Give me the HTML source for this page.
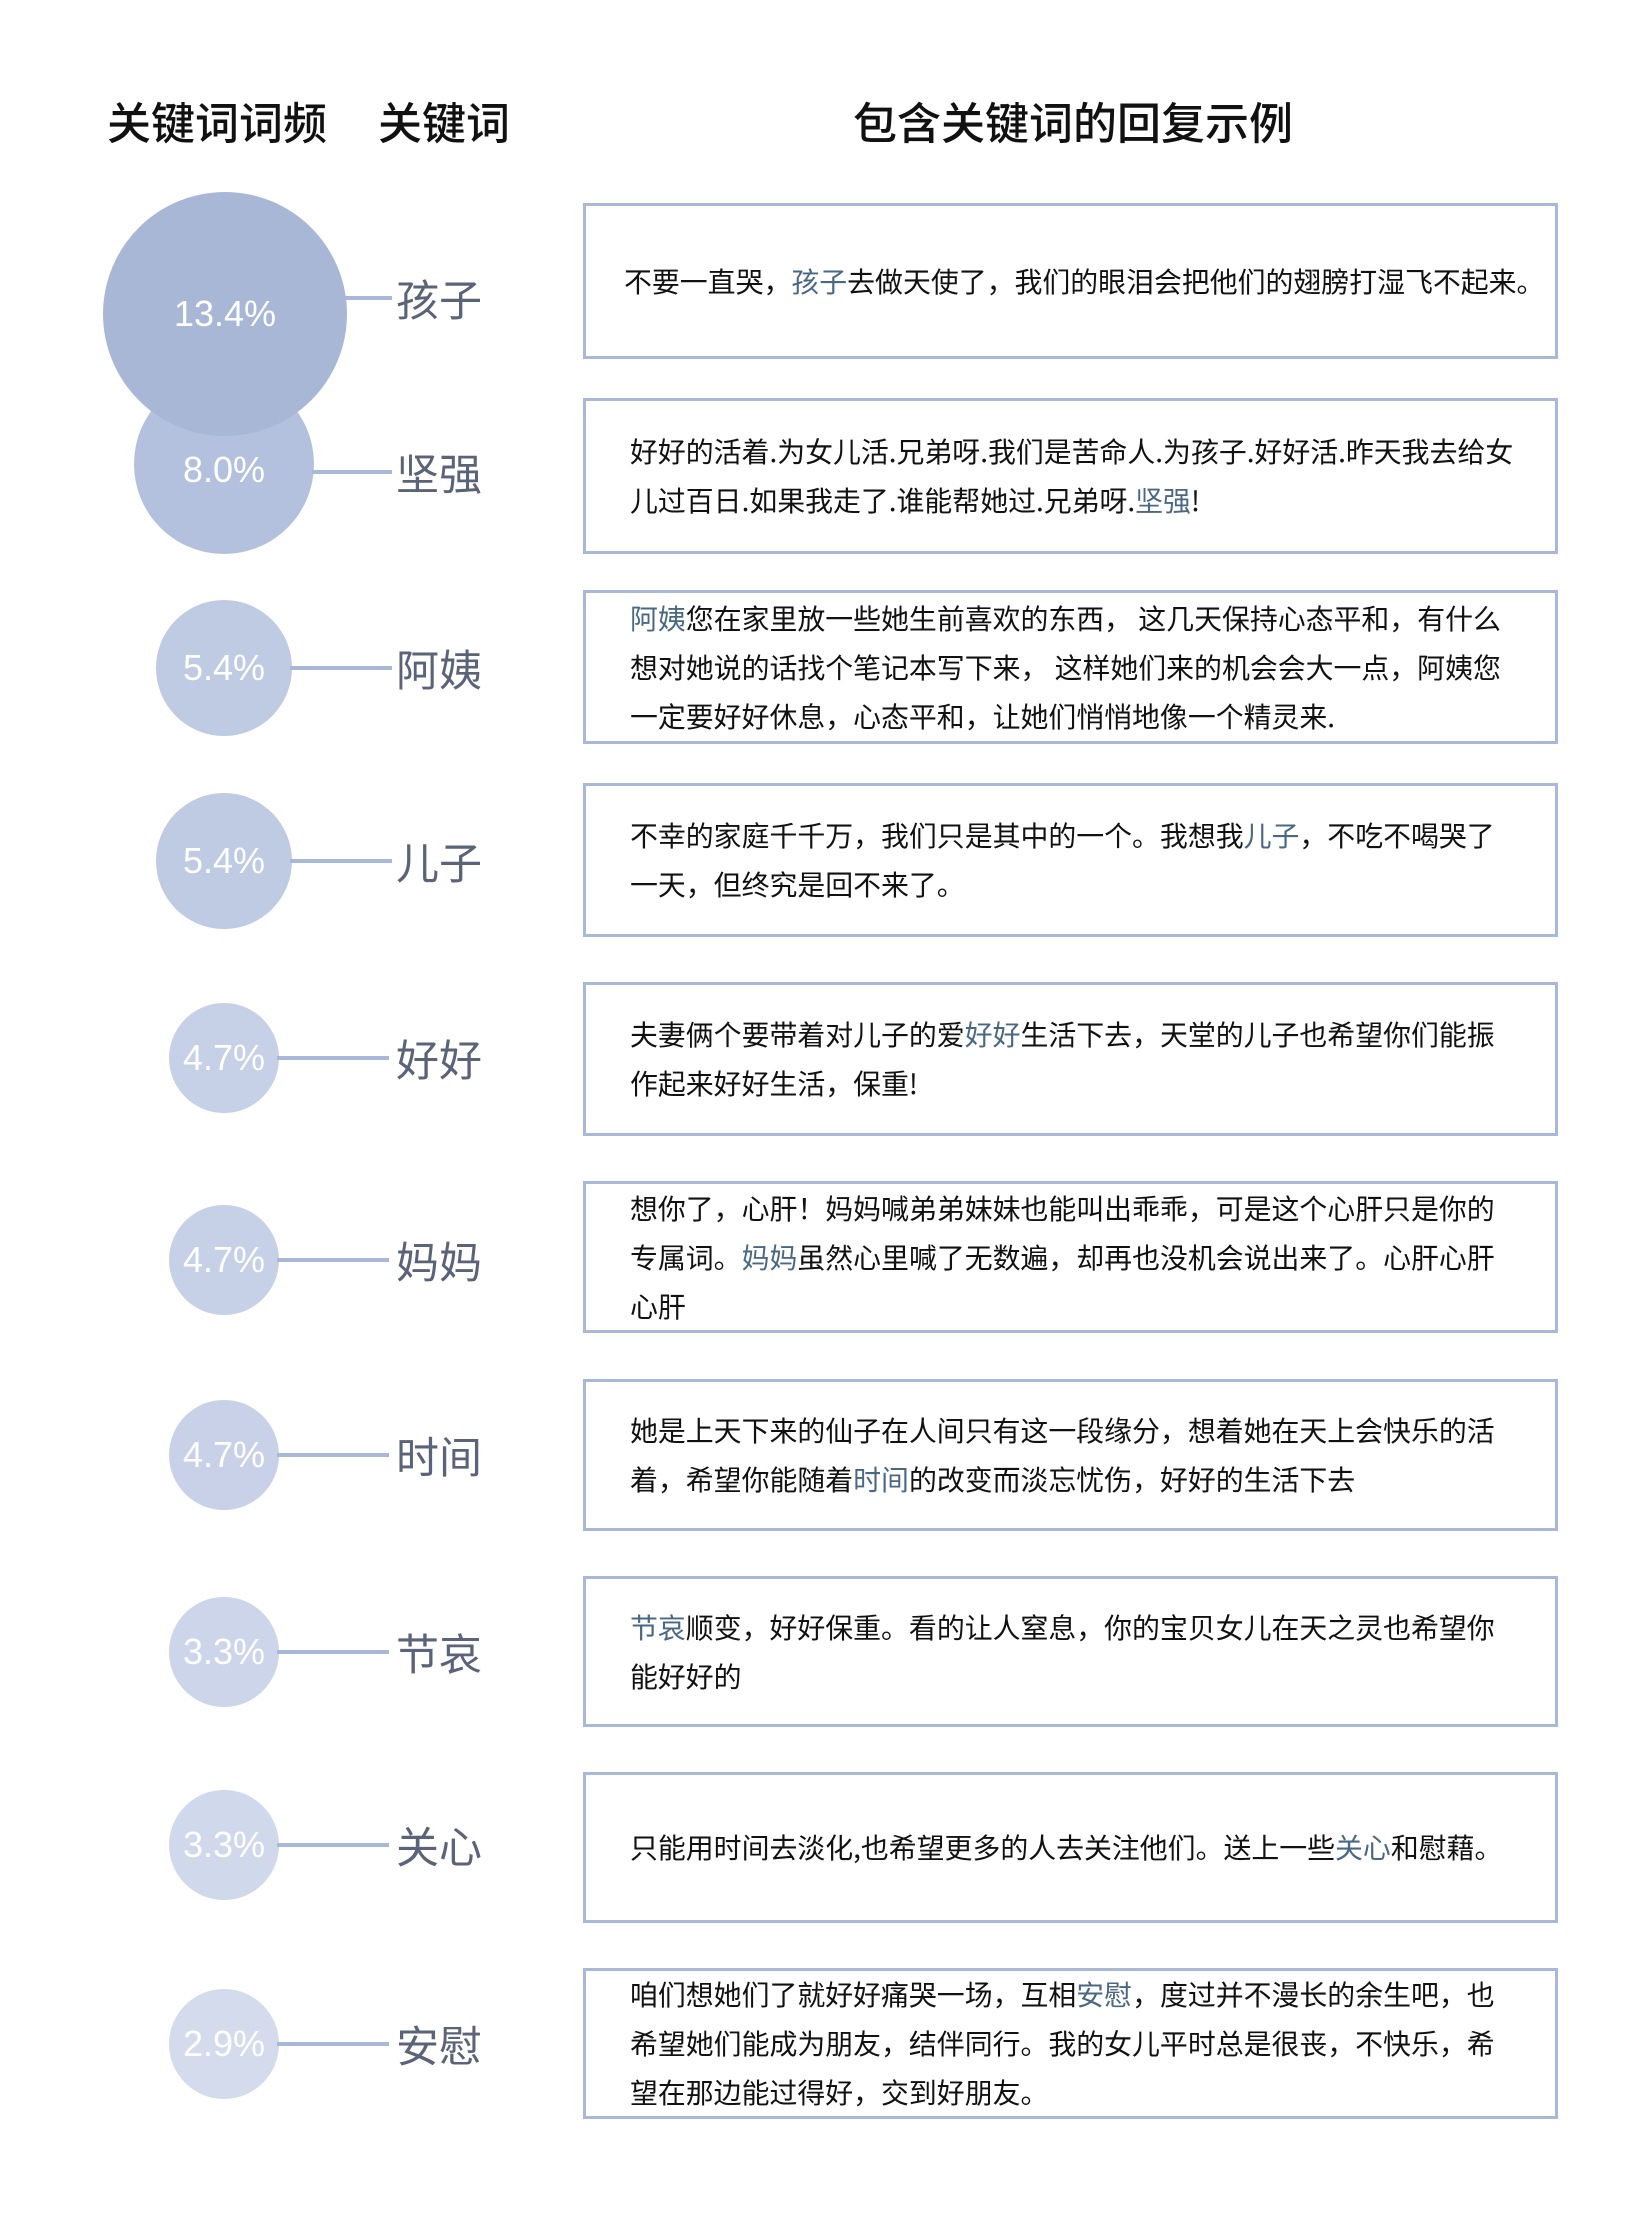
<!DOCTYPE html>
<html><head><meta charset="utf-8">
<style>
body{margin:0;width:1635px;height:2213px;background:#fff;position:relative;overflow:hidden;font-family:"Liberation Sans","Noto Sans CJK SC",sans-serif;}
.h{position:absolute;top:95px;font-size:44px;color:#111;line-height:50px;font-family:"Noto Sans CJK SC",sans-serif;font-weight:500;white-space:nowrap}
.c{position:absolute;border-radius:50%;display:flex;align-items:center;justify-content:center;color:#fff;font-size:36px;font-family:"Liberation Sans",sans-serif}
.l{position:absolute;height:4px;background:#a9b8d8;left:300px;width:92px}
.k{position:absolute;left:396px;font-size:43px;color:#5a6377;line-height:50px;font-family:"Noto Sans CJK SC",sans-serif;white-space:nowrap}
.b{position:absolute;left:583px;width:975px;border:3px solid #a9b8d8;display:flex;flex-direction:column;justify-content:center;padding-left:44px;box-sizing:border-box;font-family:"Noto Sans CJK SC",sans-serif;font-size:27.9px;line-height:49px;color:#111;white-space:nowrap}
.b i{font-style:normal;color:#4a6883}
</style></head><body>
<div class="h" style="left:107px">关键词词频</div>
<div class="h" style="left:378px">关键词</div>
<div class="h" style="left:853px">包含关键词的回复示例</div>

<div class="c" style="left:134px;top:374px;width:180px;height:180px;background:#b3c1de"><span style="position:relative;top:6px">8.0%</span></div>
<div class="c" style="left:103px;top:192px;width:244px;height:244px;background:#a9b7d7">13.4%</div>
<div class="l" style="left:345px;width:47px;top:296px"></div>
<div class="l" style="left:312px;width:80px;top:470px"></div>
<div class="k" style="top:273px">孩子</div>
<div class="k" style="top:447px">坚强</div>

<div class="c" style="left:156px;top:600px;width:136px;height:136px;background:#bfcae3">5.4%</div>
<div class="l" style="left:290px;width:102px;top:666px"></div>
<div class="k" style="top:643px">阿姨</div>
<div class="c" style="left:156px;top:793px;width:136px;height:136px;background:#bfcae3">5.4%</div>
<div class="l" style="left:290px;width:102px;top:859px"></div>
<div class="k" style="top:836px">儿子</div>

<div class="c" style="left:169px;top:1003px;width:110px;height:110px;background:#c6d0e6">4.7%</div>
<div class="l" style="left:277px;width:112px;top:1056px"></div>
<div class="k" style="top:1033px">好好</div>
<div class="c" style="left:169px;top:1205px;width:110px;height:110px;background:#c6d0e6">4.7%</div>
<div class="l" style="left:277px;width:112px;top:1258px"></div>
<div class="k" style="top:1235px">妈妈</div>
<div class="c" style="left:169px;top:1400px;width:110px;height:110px;background:#c8d1e7">4.7%</div>
<div class="l" style="left:277px;width:112px;top:1453px"></div>
<div class="k" style="top:1430px">时间</div>
<div class="c" style="left:169px;top:1597px;width:110px;height:110px;background:#ccd5e9">3.3%</div>
<div class="l" style="left:277px;width:112px;top:1650px"></div>
<div class="k" style="top:1627px">节哀</div>
<div class="c" style="left:169px;top:1790px;width:110px;height:110px;background:#d0d8eb">3.3%</div>
<div class="l" style="left:277px;width:112px;top:1843px"></div>
<div class="k" style="top:1820px">关心</div>
<div class="c" style="left:169px;top:1989px;width:110px;height:110px;background:#d3dbec">2.9%</div>
<div class="l" style="left:277px;width:112px;top:2042px"></div>
<div class="k" style="top:2019px">安慰</div>

<div class="b" style="top:203px;height:156px;padding-left:38px"><div>不要一直哭，<i>孩子</i>去做天使了，我们的眼泪会把他们的翅膀打湿飞不起来。</div></div>
<div class="b" style="top:398px;height:156px"><div>好好的活着.为女儿活.兄弟呀.我们是苦命人.为孩子.好好活.昨天我去给女</div><div>儿过百日.如果我走了.谁能帮她过.兄弟呀.<i>坚强</i>!</div></div>
<div class="b" style="top:590px;height:154px"><div><i>阿姨</i>您在家里放一些她生前喜欢的东西， 这几天保持心态平和，有什么</div><div>想对她说的话找个笔记本写下来， 这样她们来的机会会大一点，阿姨您</div><div>一定要好好休息，心态平和，让她们悄悄地像一个精灵来.</div></div>
<div class="b" style="top:783px;height:154px"><div>不幸的家庭千千万，我们只是其中的一个。我想我<i>儿子</i>，不吃不喝哭了</div><div>一天，但终究是回不来了。</div></div>
<div class="b" style="top:982px;height:154px"><div>夫妻俩个要带着对儿子的爱<i>好好</i>生活下去，天堂的儿子也希望你们能振</div><div>作起来好好生活，保重!</div></div>
<div class="b" style="top:1181px;height:152px"><div>想你了，心肝！妈妈喊弟弟妹妹也能叫出乖乖，可是这个心肝只是你的</div><div>专属词。<i>妈妈</i>虽然心里喊了无数遍，却再也没机会说出来了。心肝心肝</div><div>心肝</div></div>
<div class="b" style="top:1379px;height:152px"><div>她是上天下来的仙子在人间只有这一段缘分，想着她在天上会快乐的活</div><div>着，希望你能随着<i>时间</i>的改变而淡忘忧伤，好好的生活下去</div></div>
<div class="b" style="top:1576px;height:151px"><div><i>节哀</i>顺变，好好保重。看的让人窒息，你的宝贝女儿在天之灵也希望你</div><div>能好好的</div></div>
<div class="b" style="top:1772px;height:151px"><div>只能用时间去淡化,也希望更多的人去关注他们。送上一些<i>关心</i>和慰藉。</div></div>
<div class="b" style="top:1968px;height:151px"><div>咱们想她们了就好好痛哭一场，互相<i>安慰</i>，度过并不漫长的余生吧，也</div><div>希望她们能成为朋友，结伴同行。我的女儿平时总是很丧，不快乐，希</div><div>望在那边能过得好，交到好朋友。</div></div>
</body></html>
